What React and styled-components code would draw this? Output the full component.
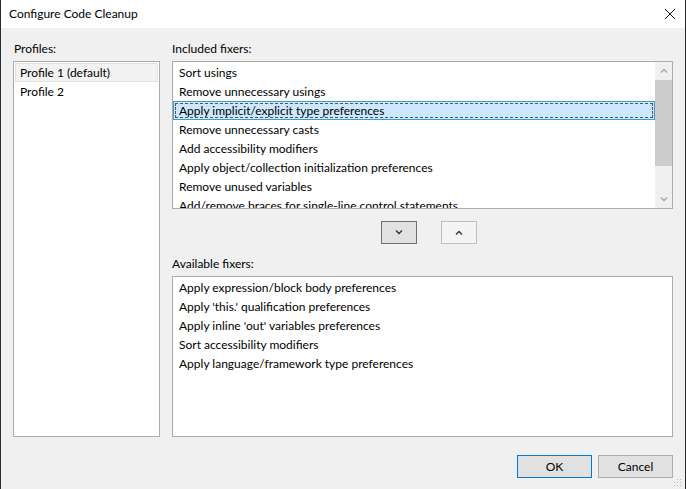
import React from "react";
import styled, { createGlobalStyle } from "styled-components";

const Global = createGlobalStyle`
  html, body { margin: 0; padding: 0; background: #f0f0f0; }
  body { font-family: Lato, "Noto Sans", sans-serif; font-size: 12px; color: #000; }
  * { box-sizing: border-box; }
`;

const Window = styled.div`
  position: relative;
  width: 686px;
  height: 489px;
  display: flex;
  flex-direction: column;
  border-left: 1px solid #2b2b2b;
  border-right: 1px solid #2b2b2b;
  background: #f0f0f0;
  overflow: hidden;
`;

const TitleBar = styled.div`
  height: 28px;
  flex: none;
  background: #fff;
  display: flex;
  align-items: center;
  justify-content: space-between;
  padding: 0 9px 0 8px;
`;

const Title = styled.span`
  font-size: 12px;
  line-height: 16px;
  padding-bottom: 1px;
`;

const CloseBtn = styled.svg`
  width: 12px;
  height: 12px;
`;

const Body = styled.div`
  flex: 1;
  display: flex;
  flex-direction: column;
  padding: 13px 12px 0 12px;
`;

const Main = styled.div`
  display: flex;
  gap: 12px;
`;

const Column = styled.div`
  display: flex;
  flex-direction: column;
  width: ${(p) => p.$w}px;
`;

const Label = styled.div`
  height: 16px;
  line-height: 16px;
  margin-bottom: 4px;
  padding-left: ${(p) => p.$indent || 0}px;
`;

const ListBox = styled.div`
  position: relative;
  height: ${(p) => p.$h}px;
  background: #fff;
  border: 1px solid #acacac;
  display: flex;
  overflow: hidden;
`;

const Rows = styled.div`
  flex: 1;
  display: flex;
  flex-direction: column;
  padding-top: 1px;
  min-width: 0;
`;

const Row = styled.div`
  height: 19px;
  flex: none;
  line-height: 17px;
  padding-left: 5px;
  white-space: nowrap;
  border: 1px solid ${(p) => (p.$selected ? "#3c9bd0" : "transparent")};
  background: ${(p) => (p.$selected ? "#cce8ff" : "transparent")};
  outline: ${(p) => (p.$selected ? "1px dashed #555" : "none")};
  outline-offset: -3px;
`;

const ProfileRow = styled.div`
  height: 19px;
  flex: none;
  line-height: 17px;
  padding-left: 4px;
  margin: 0 1px;
  white-space: nowrap;
  border: 1px solid ${(p) => (p.$selected ? "#e2e2e2" : "transparent")};
  background: ${(p) => (p.$selected ? "#f2f2f2" : "transparent")};
`;

const ScrollBar = styled.div`
  width: 17px;
  flex: none;
  background: #f0f0f0;
  display: flex;
  flex-direction: column;
`;

const ScrollArrow = styled.div`
  height: 17px;
  flex: none;
  display: flex;
  align-items: center;
  justify-content: center;
`;

const Track = styled.div`
  flex: 1;
  display: flex;
  flex-direction: column;
  padding-top: 1px;
`;

const Thumb = styled.div`
  height: 86px;
  background: #cdcdcd;
`;

const MoveRow = styled.div`
  display: flex;
  gap: 24px;
  margin: 12px 0 12px 209px;
`;

const MoveButton = styled.div`
  width: 36px;
  height: 23px;
  display: flex;
  align-items: center;
  justify-content: center;
  background: ${(p) => (p.$disabled ? "#f4f4f4" : "#e1e1e1")};
  border: 1px solid ${(p) => (p.$disabled ? "#bfbfbf" : "#707070")};
`;

const Footer = styled.div`
  display: flex;
  justify-content: flex-end;
  gap: 6px;
  margin-top: 18px;
`;

const Button = styled.div`
  width: 75px;
  height: 23px;
  display: flex;
  align-items: center;
  justify-content: center;
  background: #e1e1e1;
  border: 1px solid ${(p) => (p.$primary ? "#0078d7" : "#adadad")};
  padding-bottom: 1px;
`;

const Grip = styled.svg`
  position: absolute;
  right: 2px;
  bottom: 2px;
  width: 10px;
  height: 10px;
`;

const Chevron = ({ up, color = "#000", w = 8 }) => (
  <svg width={w} height="5" viewBox="0 0 8 5">
    <path
      d={up ? "M1 4.5 L4 1.5 L7 4.5" : "M1 0.5 L4 3.5 L7 0.5"}
      fill="none"
      stroke={color}
      strokeWidth="1.4"
    />
  </svg>
);

const included = [
  "Sort usings",
  "Remove unnecessary usings",
  "Apply implicit/explicit type preferences",
  "Remove unnecessary casts",
  "Add accessibility modifiers",
  "Apply object/collection initialization preferences",
  "Remove unused variables",
  "Add/remove braces for single-line control statements",
];

const available = [
  "Apply expression/block body preferences",
  "Apply 'this.' qualification preferences",
  "Apply inline 'out' variables preferences",
  "Sort accessibility modifiers",
  "Apply language/framework type preferences",
];

export default function App() {
  return (
    <>
      <Global />
      <Window>
        <TitleBar>
          <Title>Configure Code Cleanup</Title>
          <CloseBtn viewBox="0 0 12 12">
            <path d="M1 1 L11 11 M11 1 L1 11" stroke="#111" strokeWidth="1" />
          </CloseBtn>
        </TitleBar>
        <Body>
          <Main>
            <Column $w={147}>
              <Label $indent={1}>Profiles:</Label>
              <ListBox $h={376}>
                <Rows>
                  <ProfileRow $selected>Profile 1 (default)</ProfileRow>
                  <ProfileRow>Profile 2</ProfileRow>
                </Rows>
              </ListBox>
            </Column>
            <Column $w={501}>
              <Label>Included fixers:</Label>
              <ListBox $h={148}>
                <Rows>
                  {included.map((t, i) => (
                    <Row key={t} $selected={i === 2}>
                      {t}
                    </Row>
                  ))}
                </Rows>
                <ScrollBar>
                  <ScrollArrow>
                    <Chevron up color="#a6a6a6" />
                  </ScrollArrow>
                  <Track>
                    <Thumb />
                  </Track>
                  <ScrollArrow>
                    <Chevron color="#a6a6a6" />
                  </ScrollArrow>
                </ScrollBar>
              </ListBox>
              <MoveRow>
                <MoveButton>
                  <Chevron color="#333" />
                </MoveButton>
                <MoveButton $disabled>
                  <Chevron up color="#333" />
                </MoveButton>
              </MoveRow>
              <Label>Available fixers:</Label>
              <ListBox $h={161}>
                <Rows>
                  {available.map((t) => (
                    <Row key={t}>{t}</Row>
                  ))}
                </Rows>
              </ListBox>
            </Column>
          </Main>
          <Footer>
            <Button $primary>OK</Button>
            <Button>Cancel</Button>
          </Footer>
        </Body>
        <Grip viewBox="0 0 10 10">
          {[
            [8, 0], [8, 3], [8, 6], [8, 9],
            [5, 3], [5, 6], [5, 9],
            [2, 6], [2, 9],
          ].map(([x, y], i) => (
            <rect key={i} x={x - 1} y={y - 1} width="1" height="1" fill="#b8b8b8" />
          ))}
        </Grip>
      </Window>
    </>
  );
}
